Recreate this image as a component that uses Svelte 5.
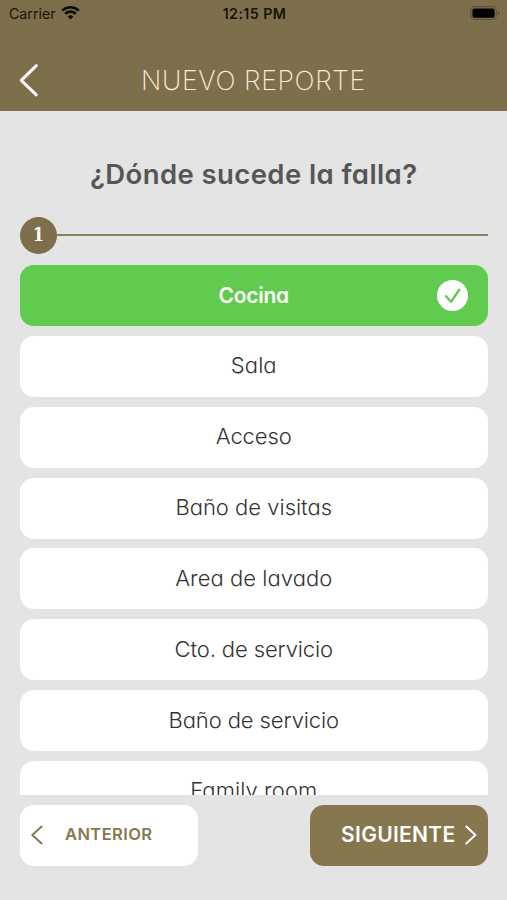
<script lang="ts">
	const places = [
		{ name: 'Cocina', spacing: '-0.25px' },
		{ name: 'Sala', spacing: '0.1px' },
		{ name: 'Acceso', spacing: '-0.1px' },
		{ name: 'Baño de visitas', spacing: '0px' },
		{ name: 'Area de lavado', spacing: '0.05px' },
		{ name: 'Cto. de servicio', spacing: '-0.12px' },
		{ name: 'Baño de servicio', spacing: '-0.1px' },
		{ name: 'Family room', spacing: '0.1px' }
	];

	let selected = $state('Cocina');
</script>

<div class="screen">
	<header>
		<div class="status">
			<div class="carrier">
				<span>Carrier</span>
				<svg width="19" height="14" viewBox="0 0 19 14">
					<path d="M1.2 4.6 A12 12 0 0 1 17.8 4.6" />
					<path d="M4.2 7.7 A7.7 7.7 0 0 1 14.8 7.7" />
					<path class="dot" d="M6.6 10.6 A4.2 4.2 0 0 1 12.4 10.6 L9.5 13.6 Z" />
				</svg>
			</div>
			<span class="time">12:15 PM</span>
			<svg class="battery" width="30" height="15" viewBox="0 0 30 15">
				<rect class="shell" x="0.7" y="0.7" width="25.6" height="12.8" rx="4" />
				<rect x="2.4" y="2.4" width="22.2" height="9.4" rx="2" />
				<path class="cap" d="M27.8 5 Q29.6 6 29.6 7.1 Q29.6 8.3 27.8 9.2 Z" />
			</svg>
		</div>
		<div class="nav">
			<button class="back" aria-label="Atrás">
				<svg width="20" height="34" viewBox="0 0 20 34">
					<path d="M17.3 2.6 L2.3 17.4 L17.3 31.8" />
				</svg>
			</button>
			<h1>NUEVO REPORTE</h1>
		</div>
	</header>

	<main>
		<h2>¿Dónde sucede la falla?</h2>
		<div class="step">
			<span class="number">1</span>
			<span class="line"></span>
		</div>
		<div class="list">
			{#each places as place}
				<button
					class="option"
					class:selected={selected === place.name}
					onclick={() => (selected = place.name)}
				>
					<span style:letter-spacing={place.spacing}>{place.name}</span>
					{#if selected === place.name}
						<svg class="check" width="31" height="31" viewBox="0 0 31 31">
							<circle cx="15.5" cy="15.5" r="15.5" />
							<path d="M9.1 16.3 L14 21.8 L22.3 9.8" />
						</svg>
					{/if}
				</button>
			{/each}
		</div>
	</main>

	<footer>
		<button class="prev">
			<svg width="12" height="20" viewBox="0 0 12 20">
				<path d="M10.6 1.5 L1.3 10 L10.6 18.5" />
			</svg>
			<span>ANTERIOR</span>
		</button>
		<button class="next">
			<span>SIGUIENTE</span>
			<svg width="12" height="20" viewBox="0 0 12 20">
				<path d="M1.3 1.5 L10.4 10 L1.3 18.5" />
			</svg>
		</button>
	</footer>
</div>

<style>
	:global(body) {
		margin: 0;
		background: #e4e4e4;
	}

	.screen {
		display: flex;
		flex-direction: column;
		height: 900px;
		overflow: hidden;
		background: #e4e4e4;
		font-family: Inter, 'Liberation Sans', sans-serif;
		font-feature-settings: 'cv11', 'ss03';
	}

	button {
		border: none;
		padding: 0;
		font: inherit;
		font-feature-settings: inherit;
		cursor: pointer;
	}

	svg {
		display: block;
		fill: none;
		stroke-linecap: round;
		stroke-linejoin: round;
	}

	header {
		flex: none;
		height: 110.5px;
		background: #7e6f4c;
	}

	.status {
		display: grid;
		grid-template-columns: 1fr auto 1fr;
		align-items: center;
		height: 27px;
		padding: 0 7px 0 9px;
		font-size: 14.2px;
		color: #17130b;
		font-feature-settings: normal;
	}

	.carrier {
		display: flex;
		align-items: center;
		gap: 5px;
	}

	.carrier svg {
		margin-top: -2px;
		stroke: #0c0a06;
		stroke-width: 2.6;
		stroke-linecap: butt;
	}

	.carrier .dot {
		fill: #0c0a06;
		stroke: none;
	}

	.time {
		font-weight: 600;
		letter-spacing: 0.45px;
	}

	.battery {
		justify-self: end;
		fill: #000;
	}

	.battery .shell {
		fill: none;
		stroke: #5d5238;
		stroke-width: 1.2;
	}

	.battery .cap {
		fill: #5d5238;
	}

	.nav {
		display: grid;
		grid-template-columns: 60px 1fr 60px;
		align-items: center;
		height: 108px;
		margin-top: -1px;
	}

	.back {
		margin-left: 19px;
		background: none;
	}

	.back svg {
		stroke: #fff;
		stroke-width: 3;
	}

	h1 {
		margin: 0;
		text-align: center;
		font-size: 26.5px;
		font-weight: 250;
		letter-spacing: 0.65px;
		color: #fbecd9;
		white-space: nowrap;
	}

	main {
		flex: none;
		display: flex;
		flex-direction: column;
		height: 684.5px;
		padding: 0 19.5px 0 20px;
		overflow: hidden;
	}

	h2 {
		margin: 45px 0 0;
		text-align: center;
		font-size: 27.5px;
		line-height: 36px;
		font-weight: 600;
		letter-spacing: 0.4px;
		color: #575555;
		white-space: nowrap;
	}

	.step {
		display: flex;
		align-items: center;
		margin-top: 25px;
	}

	.number {
		width: 37px;
		height: 37px;
		border-radius: 50%;
		background: #7e6f4c;
		color: #fff;
		font-family: 'DejaVu Serif Condensed', 'DejaVu Serif', serif;
		font-size: 18px;
		font-weight: 700;
		font-stretch: condensed;
		line-height: 36px;
		text-align: center;
	}

	.line {
		flex: 1;
		height: 1.5px;
		background: #8a8161;
	}

	.list {
		display: flex;
		flex-direction: column;
		gap: 9.85px;
		margin-top: 11.5px;
	}

	.option {
		position: relative;
		flex: none;
		height: 61px;
		padding-bottom: 2px;
		border-radius: 14px;
		background: #fff;
		color: #333;
		font-size: 22px;
		font-weight: 300;
		line-height: 30px;
	}

	.selected {
		padding-bottom: 0;
		background: #60cb4e;
		color: #fff;
		font-size: 21px;
		font-weight: 600;
	}

	.check {
		position: absolute;
		top: 15px;
		right: 19.5px;
		fill: #fff;
	}

	.check path {
		fill: none;
		stroke: #60cb4e;
		stroke-width: 2.4;
	}

	footer {
		display: flex;
		justify-content: space-between;
		padding: 10px 19.5px 0 20px;
	}

	footer button {
		display: flex;
		align-items: center;
		width: 177.5px;
		height: 61px;
		border-radius: 14px;
		font-weight: 600;
	}

	footer span {
		margin-top: -3px;
	}

	.prev {
		padding-left: 11px;
		gap: 22px;
		background: #fff;
		color: #86774f;
		font-size: 16.5px;
		letter-spacing: 0.4px;
	}

	.next {
		justify-content: flex-end;
		padding-right: 11px;
		gap: 9px;
		background: #86774f;
		color: #fff;
		font-size: 21px;
		letter-spacing: 0.3px;
	}

	footer svg {
		margin-top: -1px;
		stroke: currentColor;
		stroke-width: 1.9;
	}
</style>
